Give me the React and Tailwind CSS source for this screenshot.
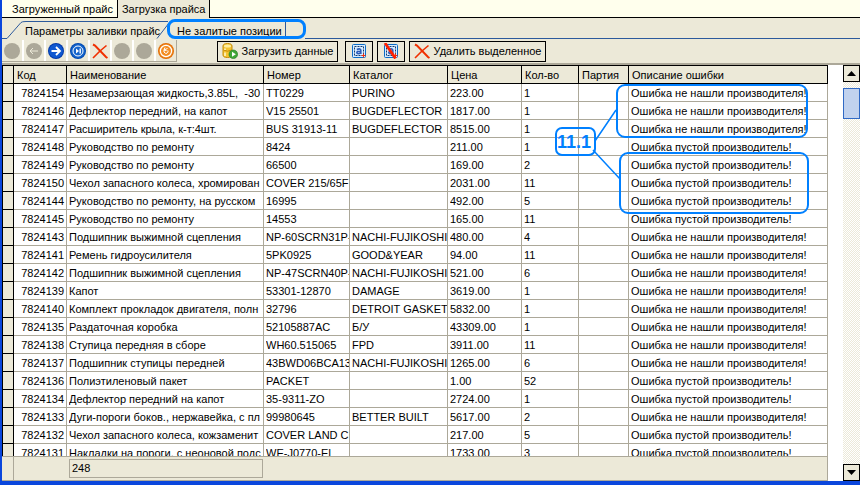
import React from 'react';

const columns = [
  { title: 'Код', width: 'w-[53px]' },
  { title: 'Наименование', width: 'w-[197px]' },
  { title: 'Номер', width: 'w-[86px]' },
  { title: 'Каталог', width: 'w-[98px]' },
  { title: 'Цена', width: 'w-[74px]' },
  { title: 'Кол-во', width: 'w-[57px]' },
  { title: 'Партия', width: 'w-[50px]' },
  { title: 'Описание ошибки', width: '' },
];

const NOT_FOUND = 'Ошибка не нашли производителя!';
const EMPTY = 'Ошибка пустой производитель!';

const rows = [
  ['7824154', 'Незамерзающая жидкость,3.85L,  -30', 'TT0229', 'PURINO', '223.00', '1', '', NOT_FOUND],
  ['7824146', 'Дефлектор передний, на капот', 'V15 25501', 'BUGDEFLECTOR', '1817.00', '1', '', NOT_FOUND],
  ['7824147', 'Расширитель крыла, к-т:4шт.', 'BUS 31913-11', 'BUGDEFLECTOR', '8515.00', '1', '', NOT_FOUND],
  ['7824148', 'Руководство по ремонту', '8424', '', '211.00', '1', '', EMPTY],
  ['7824149', 'Руководство по ремонту', '66500', '', '169.00', '2', '', EMPTY],
  ['7824150', 'Чехол запасного колеса, хромирован', 'COVER 215/65F', '', '2031.00', '11', '', EMPTY],
  ['7824144', 'Руководство по ремонту, на русском', '16995', '', '492.00', '5', '', EMPTY],
  ['7824145', 'Руководство по ремонту', '14553', '', '165.00', '11', '', EMPTY],
  ['7824143', 'Подшипник выжимной сцепления', 'NP-60SCRN31P-', 'NACHI-FUJIKOSHI', '480.00', '4', '', NOT_FOUND],
  ['7824141', 'Ремень гидроусилителя', '5PK0925', 'GOOD&YEAR', '94.00', '11', '', NOT_FOUND],
  ['7824142', 'Подшипник выжимной сцепления', 'NP-47SCRN40P-', 'NACHI-FUJIKOSHI', '521.00', '6', '', NOT_FOUND],
  ['7824139', 'Капот', '53301-12870', 'DAMAGE', '3619.00', '1', '', NOT_FOUND],
  ['7824140', 'Комплект прокладок двигателя, полн', '32796', 'DETROIT GASKET', '5832.00', '1', '', NOT_FOUND],
  ['7824135', 'Раздаточная коробка', '52105887AC', 'Б/У', '43309.00', '1', '', NOT_FOUND],
  ['7824138', 'Ступица передняя в сборе', 'WH60.515065', 'FPD', '3911.00', '11', '', NOT_FOUND],
  ['7824137', 'Подшипник ступицы передней', '43BWD06BCA13', 'NACHI-FUJIKOSHI', '1265.00', '6', '', NOT_FOUND],
  ['7824136', 'Полиэтиленовый пакет', 'PACKET', '', '1.00', '52', '', EMPTY],
  ['7824134', 'Дефлектор передний на капот', '35-9311-ZO', '', '2724.00', '1', '', EMPTY],
  ['7824133', 'Дуги-пороги боков., нержавейка, с пл', '99980645', 'BETTER BUILT', '5617.00', '2', '', NOT_FOUND],
  ['7824132', 'Чехол запасного колеса, кожзаменит', 'COVER LAND CI', '', '217.00', '5', '', EMPTY],
  ['7824131', 'Накладки на пороги, с неоновой подс', 'WE-J0770-EL', '', '1733.00', '3', '', EMPTY],
];

function Orb({ ring, fill, children }) {
  return (
    <svg className="w-4 h-4" viewBox="0 0 16 16" fill="none">
      <circle cx="8" cy="8" r="8" fill={ring} />
      <circle cx="8" cy="8" r="7" fill={fill} />
      {children}
    </svg>
  );
}

function CrossIcon({ className }) {
  return (
    <svg className={className} viewBox="0 0 16 16" fill="none" stroke="#f03000">
      <path d="M1 1.5 L3 2.5 L14 14 L15.5 15" strokeWidth="2" />
      <path d="M14.5 2.5 L8 8 L1 15" strokeWidth="1.6" />
    </svg>
  );
}

function DatabaseIcon() {
  return (
    <svg className="w-4 h-4" viewBox="0 0 16 16">
      <path d="M1 3 Q1 0.5 5.5 0.5 Q10 0.5 10 3 V12 Q10 14.5 5.5 14.5 Q1 14.5 1 12 Z" fill="#f4c430" stroke="#c48a08" />
      <path d="M1.5 7 Q5.5 9.5 9.5 7" stroke="#c48a08" fill="none" />
      <ellipse cx="5.5" cy="3" rx="3.6" ry="1.6" fill="#fdeea0" />
      <path d="M3 5.5 V7 M3 9.5 V13" stroke="#fff6c8" strokeWidth="1.6" />
      <circle cx="11.3" cy="11.3" r="4.3" fill="#3fa535" stroke="#1d7a20" strokeWidth="0.6" />
      <path d="M10 8.8 L13.8 11.3 L10 13.8 Z" fill="#fff" />
    </svg>
  );
}

function SelectIcon({ crossed }) {
  return (
    <svg className="w-4 h-4" viewBox="0 0 16 16" fill="none">
      <rect x="1.5" y="1.5" width="13" height="13" rx="1" fill="#d6ebff" stroke="#0a6cc8" />
      <rect x="3.5" y="3.5" width="9" height="9" stroke="#123c6c" strokeDasharray="2 1" />
      <path d="M5.8 6.4 Q9.8 5 9.8 7.6 V11 M9.8 8.2 Q5.8 8 5.8 9.8 Q6.4 11.6 9.8 10" stroke="#2a5cb8" strokeWidth="1.6" />
      <path d="M12.5 10.5 V14.5 M10.5 12.5 H14.5" stroke="#f03010" />
      {crossed && <path d="M2 0 L12.5 15.5" stroke="#ff2000" strokeWidth="2.8" />}
    </svg>
  );
}

const navButtons = [
  { label: 'Первая', disabled: true, icon: <Orb ring="#aca899" fill="#aca899" /> },
  {
    label: 'Назад',
    disabled: true,
    icon: (
      <Orb ring="#aca899" fill="#aca899">
        <path d="M12 8 H4.5 M7 5 L4 8 L7 11" stroke="#ece9d8" />
      </Orb>
    ),
  },
  {
    label: 'Вперёд',
    icon: (
      <Orb ring="#0038a8" fill="#1058d0">
        <path d="M3.5 8 H11.5 M8 4 L12 8 L8 12" stroke="#fff" strokeWidth="1.8" />
      </Orb>
    ),
  },
  {
    label: 'Последняя',
    icon: (
      <Orb ring="#0048b0" fill="#1464cc">
        <circle cx="8" cy="8" r="5" stroke="#fff" />
        <path d="M6 5.5 L9 8 L6 10.5 Z" fill="#fff" />
        <path d="M10.2 5.5 V10.5" stroke="#fff" strokeWidth="1.4" />
      </Orb>
    ),
  },
  { label: 'Удалить', icon: <CrossIcon className="w-4 h-4" /> },
  { label: 'Сохранить', disabled: true, icon: <Orb ring="#aca899" fill="#aca899" /> },
  { label: 'Отменить', disabled: true, icon: <Orb ring="#aca899" fill="#aca899" /> },
  {
    label: 'Обновить',
    icon: (
      <Orb ring="#e06c08" fill="#f48c20">
        <circle cx="8" cy="8" r="5.6" stroke="#fff" strokeWidth="1.2" />
        <path d="M9.5 5.5 L6 7 V9 Q7 10.8 9 10.3 Q10.8 9 9.8 7.4 M7 4.5 L6 7 L8.6 7.6" stroke="#fff" />
      </Orb>
    ),
  },
];

function MainTabs() {
  return (
    <div className="flex h-[18px] shrink-0 bg-[#ffffed] leading-4">
      <button className="pl-2.5 pr-1 border-r border-b border-black">Загруженный прайс</button>
      <button className="px-1 bg-[#ece9d8] border-r border-black">Загрузка прайса</button>
      <div className="flex-1 border-b border-black" />
    </div>
  );
}

function SubTabs() {
  return (
    <div className="relative flex h-[21px] shrink-0 items-end">
      <svg className="absolute left-0 top-0 w-full h-[21px]" fill="none" stroke="#2c5a9c">
        <path d="M0 20.5 H5 L19 4.5 Q20 3.5 24 3.5 H166" />
        <path d="M155 20.5 L167 5 Q168 3.5 172 3.5 H283.5 V18" />
        <path d="M303 20.5 H4000" />
      </svg>
      <button className="relative ml-[23px] w-[138px] whitespace-nowrap text-left leading-4">
        Параметры заливки прайс
      </button>
      <button className="relative ml-3.5 whitespace-nowrap leading-4">Не залитые позиции</button>
      <div className="absolute left-[165px] top-[1px] w-[139px] h-5 rounded-lg border-3 border-[#0080ff]" />
    </div>
  );
}

const actionButton = 'flex h-[21px] items-center justify-center border border-black';

function Toolbar() {
  return (
    <div className="flex h-[26px] shrink-0 items-center border-b-2 border-[#aca899]">
      <div className="flex h-[22px] shrink-0 gap-0.5 bg-white border-r border-b border-[#aca899]">
        {navButtons.map((b) => (
          <button
            key={b.label}
            aria-label={b.label}
            disabled={b.disabled}
            className="flex w-5 items-center justify-center bg-[#ece9d8]"
          >
            {b.icon}
          </button>
        ))}
      </div>
      <button className={`${actionButton} ml-10 w-[121px] gap-1`}>
        <DatabaseIcon />
        Загрузить данные
      </button>
      <button aria-label="Выделить все" className={`${actionButton} ml-[7px] w-7`}>
        <SelectIcon />
      </button>
      <button aria-label="Снять выделение" className={`${actionButton} ml-1 w-7`}>
        <SelectIcon crossed />
      </button>
      <button className={`${actionButton} ml-1 w-[137px] gap-1`}>
        <CrossIcon className="w-4 h-4" />
        Удалить выделенное
      </button>
    </div>
  );
}

function Callout() {
  return (
    <div className="pointer-events-none absolute left-[552px] top-[18px] w-[256px] h-[132px]">
      <svg className="absolute inset-0" width="256" height="132" fill="none" stroke="#0080ff" strokeWidth="2">
        <rect x="63" y="2" width="190" height="52" rx="8" />
        <rect x="66" y="70" width="188" height="60" rx="8" />
        <rect x="2" y="45" width="39" height="27" rx="6" />
        <path d="M41 58 L62 27 M39 67 L66 96" strokeWidth="1.5" />
      </svg>
      <span className="absolute left-[3px] top-[49px] text-lg leading-5 font-bold text-[#0080ff]">11.1</span>
    </div>
  );
}

function PriceTable() {
  return (
    <div className="relative min-h-0 flex-1 overflow-hidden">
      <table className="w-full table-fixed border-separate border-spacing-0">
        <thead>
          <tr className="h-[19px] bg-[#ece9d8] text-left">
            <th className="w-3 border border-black" />
            {columns.map((c) => (
              <th key={c.title} className={`${c.width} h-[19px] border-y border-r border-black p-0 pl-[3px] font-normal leading-4`}>
                {c.title}
              </th>
            ))}
          </tr>
        </thead>
        <tbody>
          {rows.map((row) => (
            <tr key={row[0]} className="h-[18px]">
              <td className="border-x border-b border-black bg-[#ece9d8] p-0" />
              {row.map((cell, i) => (
                <td key={i} className="h-[18px] border-r border-b border-[#aca899] py-0 pl-0.5 pr-0">
                  <div className={`h-4 overflow-hidden whitespace-pre leading-4 ${i === 0 ? 'pr-0.5 text-right' : ''}`}>{cell}</div>
                </td>
              ))}
            </tr>
          ))}
        </tbody>
      </table>
      <Callout />
    </div>
  );
}

function Scrollbar() {
  return (
    <div className="flex w-[17px] shrink-0 flex-col bg-[repeating-conic-gradient(#ece9d8_0_25%,#ffffff_0_50%)] bg-[length:2px_2px]">
      <button aria-label="Вверх" className="flex h-[17px] items-center justify-center border border-black bg-[#ece9d8]">
        <svg className="w-[9px] h-[5px]" viewBox="0 0 9 5"><path d="M0 5 L4.5 0 L9 5 Z" /></svg>
      </button>
      <div className="mt-1.5 h-[31px] border border-[#316ac5] bg-[#c1d2ee]" />
      <button aria-label="Вниз" className="mt-auto flex h-[17px] items-center justify-center border border-black bg-[#ece9d8]">
        <svg className="w-[9px] h-[5px]" viewBox="0 0 9 5"><path d="M0 0 L4.5 5 L9 0 Z" /></svg>
      </button>
    </div>
  );
}

export default function App() {
  return (
    <div className="flex h-screen flex-col overflow-hidden border-l-2 border-b-4 border-[#0a46dc] bg-[#ece9d8] font-['Liberation_Sans',Arial,sans-serif] text-[11px] text-black">
      <MainTabs />
      <SubTabs />
      <Toolbar />
      <div className="flex min-h-0 flex-1 bg-white">
        <div className="mr-[15px] flex min-w-0 flex-1 flex-col">
          <PriceTable />
          <div className="flex h-[25px] shrink-0 border-y border-r border-[#aca899] bg-[#ece9d8]">
            <div className="w-3 border-r border-[#aca899]" />
            <output className="ml-[55px] mt-0.5 h-[19px] w-[194px] border border-[#aca899] px-0.5 leading-[17px]">248</output>
          </div>
        </div>
        <Scrollbar />
      </div>
    </div>
  );
}
